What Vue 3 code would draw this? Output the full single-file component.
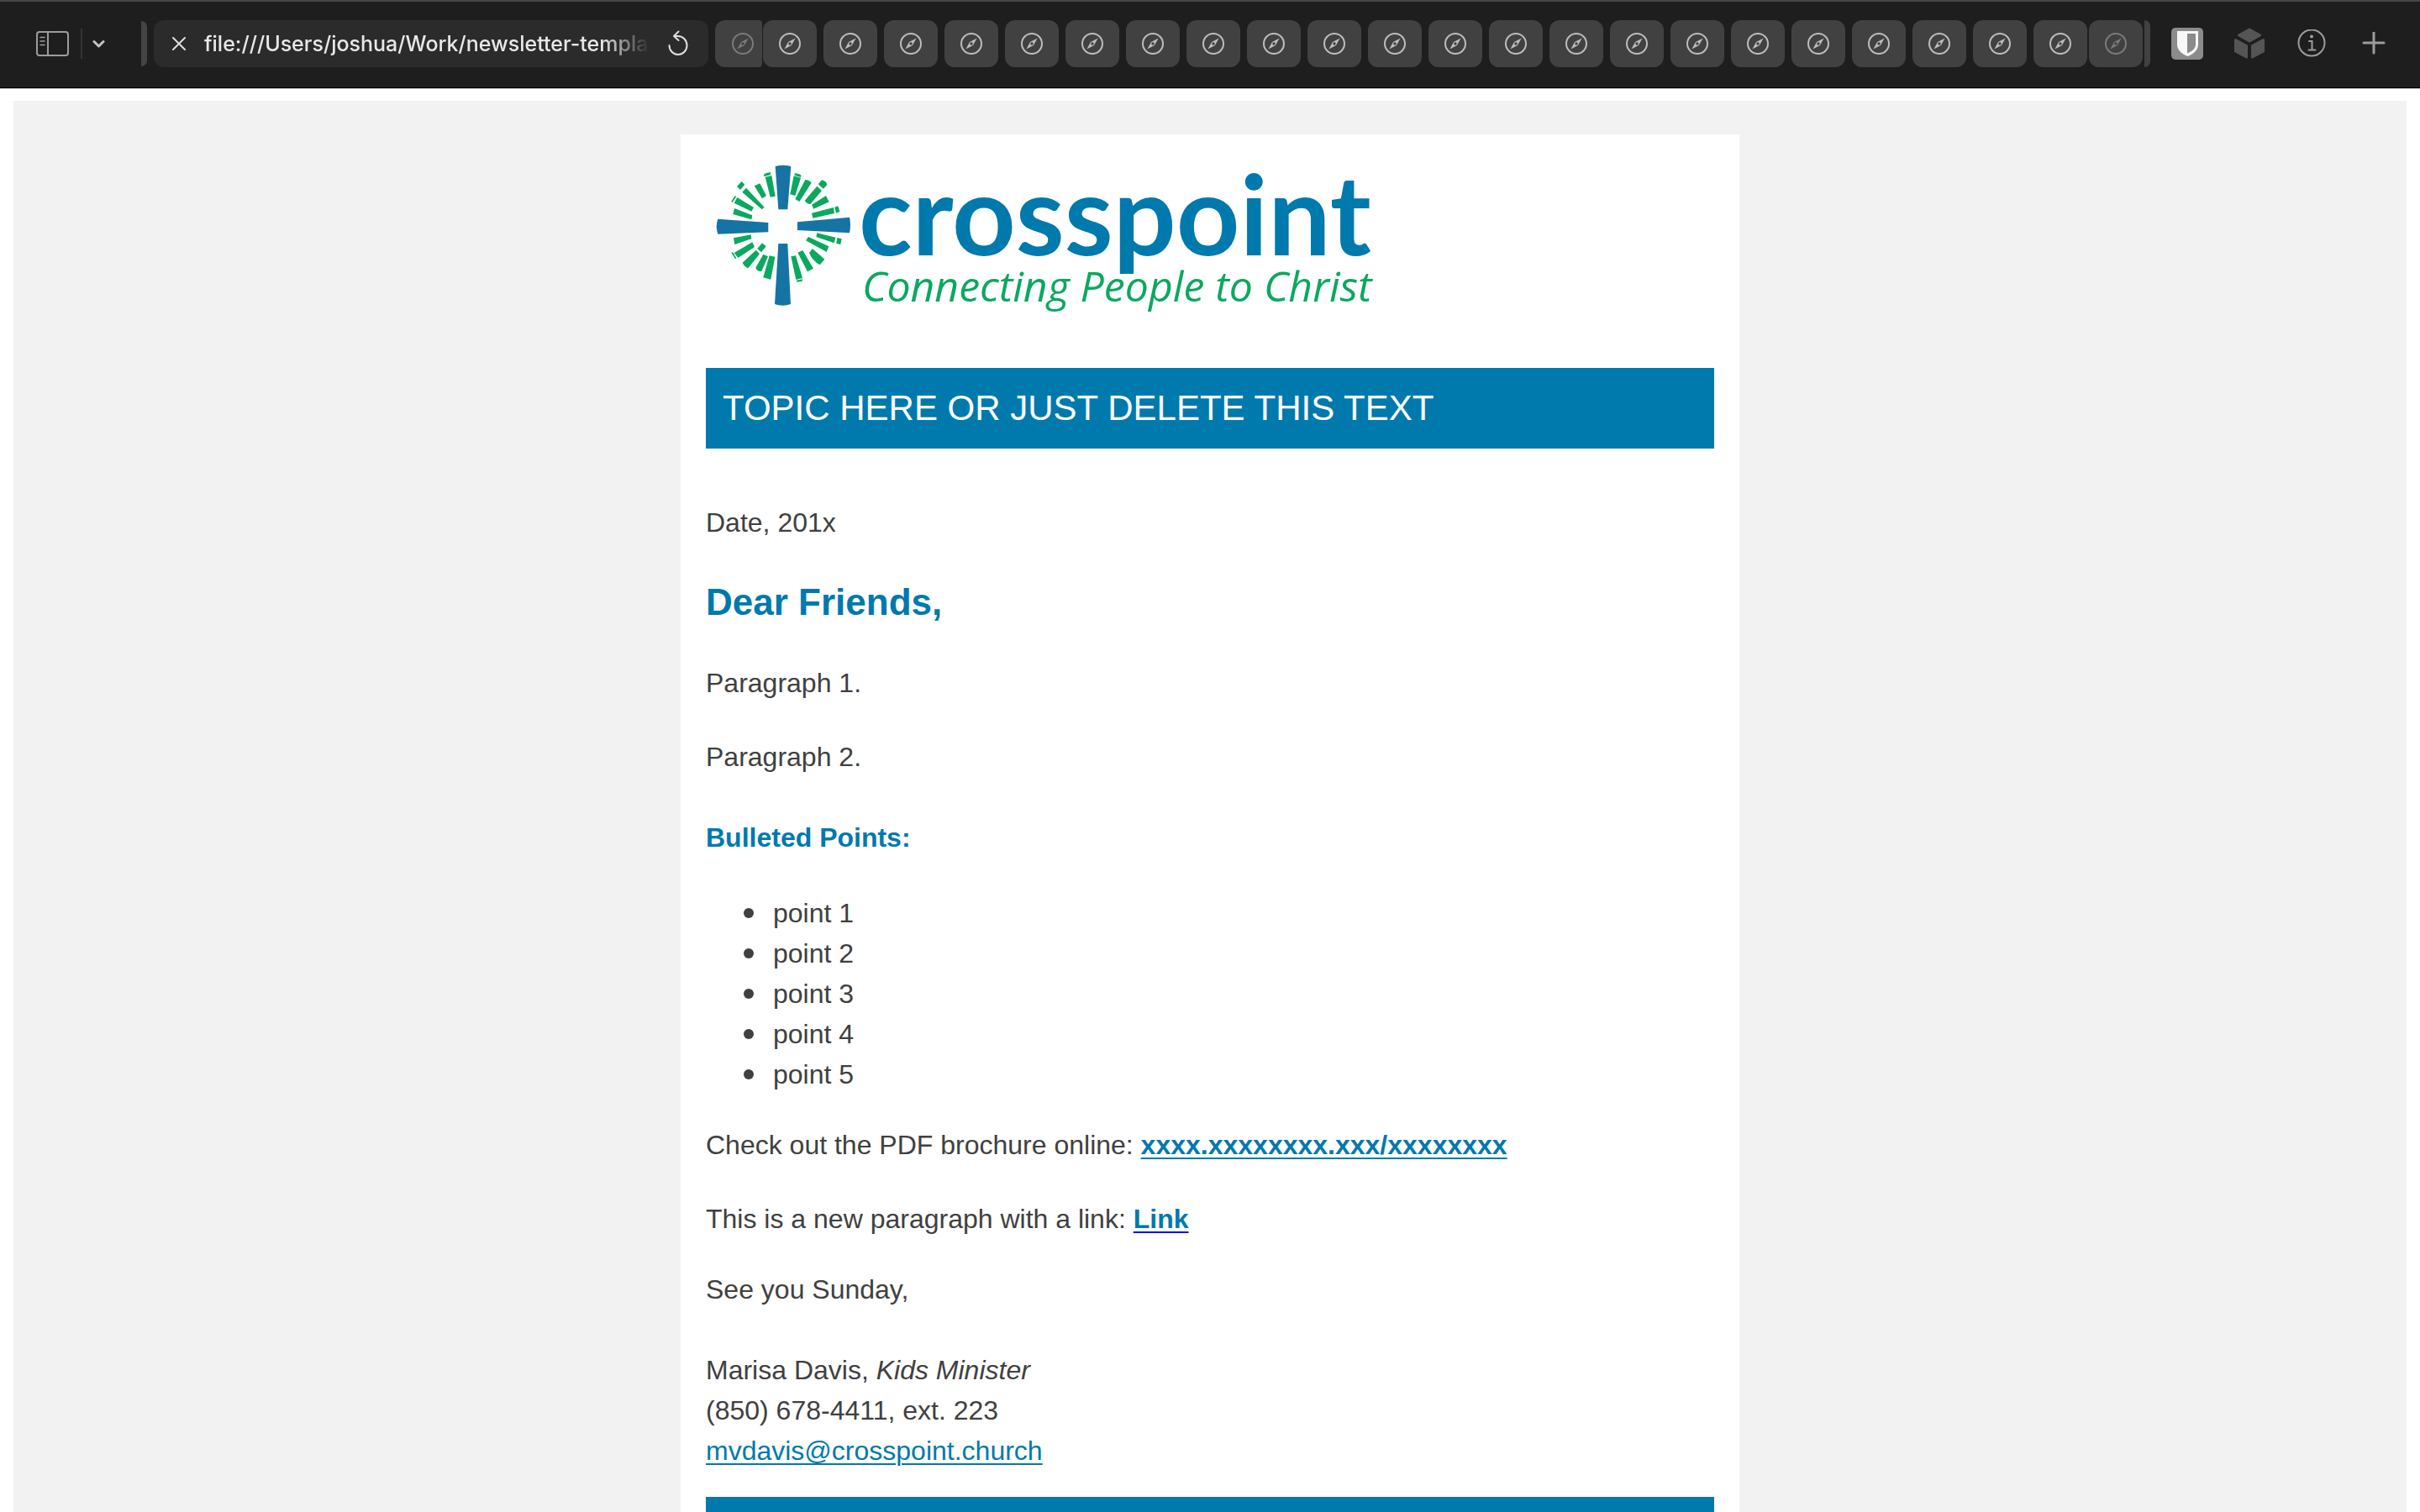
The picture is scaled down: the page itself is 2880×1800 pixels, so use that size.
<script setup>
const pinnedTabs = Array.from({ length: 22 }, (_, i) => i + 1)
const points = ['point 1', 'point 2', 'point 3', 'point 4', 'point 5']
</script>

<template>
  <div class="window">
    <svg class="symbols" aria-hidden="true">
      <symbol id="compass" viewBox="0 0 28 28">
        <circle cx="14" cy="14" r="12" fill="none" stroke="currentColor" stroke-width="2" />
        <path fill="currentColor" fill-rule="evenodd" d="M20.6 7.4 15.9 16 7.4 20.6 12 12.1ZM14 12.3a1.7 1.7 0 1 0 0 3.4 1.7 1.7 0 0 0 0-3.4Z" />
      </symbol>
    </svg>

    <header class="toolbar">
      <div class="sidebar-tools">
        <button type="button" aria-label="Show sidebar">
          <svg width="40" height="32" viewBox="0 0 40 32" fill="none" stroke="#9c9c9c" stroke-width="2">
            <rect x="2" y="2" width="37" height="28" rx="3" />
            <path d="M15 2v28" />
            <path d="M6 8.500h5M6 13h5M6 17.500h5" stroke-width="1.500" stroke-linecap="round" />
          </svg>
        </button>
        <span class="divider"></span>
        <button type="button" aria-label="Tab groups">
          <svg width="16" height="12" viewBox="0 0 16 12" fill="none" stroke="#c4c4c4" stroke-width="3" stroke-linecap="round" stroke-linejoin="round">
            <path d="M2 3.500 7.500 9 13 3.500" />
          </svg>
        </button>
      </div>
      <span class="stack-edge"></span>

      <div class="address">
        <button type="button" aria-label="Close tab">
          <svg width="16" height="16" viewBox="0 0 16 16" stroke="#dedede" stroke-width="2" stroke-linecap="round">
            <path d="M1 1l14 14M15 1 1 15" />
          </svg>
        </button>
        <input type="text" aria-label="Address" value="file:///Users/joshua/Work/newsletter-template/index.html" readonly />
        <button type="button" aria-label="Reload">
          <svg width="24" height="32" viewBox="0 0 24 32" fill="none" stroke="#dedede" stroke-width="2" stroke-linecap="round" stroke-linejoin="round">
            <path d="M1.500 18A10.500 11 0 1 0 12 7H8" />
            <path d="M12.500 1.500 7 7l5.500 5" />
          </svg>
        </button>
      </div>

      <nav class="tabs" aria-label="Tabs">
        <button type="button" class="tab dim tucked-left" aria-label="Tab">
          <svg width="28" height="28"><use href="#compass" /></svg>
        </button>
        <button v-for="n in pinnedTabs" :key="n" type="button" class="tab" :aria-label="`Tab ${n}`">
          <svg width="28" height="28"><use href="#compass" /></svg>
        </button>
        <button type="button" class="tab dim tucked-right" aria-label="Tab">
          <svg width="28" height="28"><use href="#compass" /></svg>
        </button>
        <span class="tab-tail"></span>
      </nav>

      <div class="extensions">
        <button type="button" aria-label="Password manager">
          <svg width="38" height="38" viewBox="0 0 38 38">
            <rect width="38" height="38" rx="5" fill="#8b8b8b" />
            <path fill="#f7f7f7" d="M7 4h25v16c0 7-6 11.500-12.500 14C13 31.500 7 27 7 20Z" />
            <path fill="#8b8b8b" d="M19 7h10v13c0 5-4.500 8-10 10.500Z" />
          </svg>
        </button>
        <button type="button" aria-label="Packages">
          <svg width="38" height="40" viewBox="0 0 38 40" fill="#555" stroke="#555" stroke-width="3" stroke-linejoin="round">
            <path d="M19 3 31.500 10 19 17 6.500 10Z" />
            <path d="M2.500 15.500 15.500 22.500V36L2.500 29Z" />
            <path d="M35.500 15.500 22.500 22.500V36L35.500 29Z" />
          </svg>
        </button>
        <button type="button" aria-label="Information">
          <svg width="34" height="34" viewBox="0 0 34 34" fill="none" stroke="#9c9c9c" stroke-width="2">
            <circle cx="17" cy="16" r="15.500" />
            <circle cx="17" cy="8.500" r="2" fill="#9c9c9c" stroke="none" />
            <path d="M14 14h3.500v10M13.500 24.500h8" stroke-linecap="round" />
          </svg>
        </button>
        <button type="button" aria-label="New tab">
          <svg width="28" height="28" viewBox="0 0 28 28" stroke="#9c9c9c" stroke-width="3" stroke-linecap="round">
            <path d="M14 1v24M2 13h24" />
          </svg>
        </button>
      </div>
    </header>

    <main class="page">
      <div class="backdrop">
        <article class="letter">
          <div class="logo">
            <svg class="mark" width="164" height="172" viewBox="150 130 492 516" aria-hidden="true">
              <g fill="#1574a3">
                <path d="M368 142q28-8 56 0l-12 154h-33Z" />
                <path d="M379 418h33l11 216q-28 10-57 0Z" />
                <path d="M163 330l180 13v34l-180 7q-10-27 0-54Z" />
                <path d="M447 341l186-17q6 27 0 56l-186-10Z" />
              </g>
              <g fill="#0ba860">
                <path d="M326 172q12-10 26-8l-2 9-22 5Z" />
                <path d="M332 180l23-5 13 74-18 3Z" />
                <path d="M293 212l20-9 23 44-15 10Z" />
                <path d="M231 214l17-18 11 11-16 19Z" />
                <path d="M250 234l14-15 65 69-9 8Z" />
                <path d="M211 267l13-19 5 2-14 21Z" />
                <path d="M221 273l11-20 59 36-8 14Z" />
                <path d="M217 313l5-21 64 25-3 15Z" />
                <path d="M437 167q16 0 24 8l-3 6-21-7Z" />
                <path d="M434 176l25 7-20 64-18-5Z" />
                <path d="M475 190q14 0 22 11l-43 67-15-9Z" />
                <path d="M521 206l13-15q16 3 19 17l-13 14Z" />
                <path d="M517 213l17 16-41 48q-10 1-20-13Z" />
                <path d="M498 279l51-32 11 22-55 25Z" />
                <path d="M498 309l78-20 3 21-77 17Z" />
                <path d="M580 288l12-4 6 20-13 5Z" />
                <path d="M517 380l66 16-5 20-64-22Z" />
                <path d="M589 397l16 4-4 20-15-3Z" />
                <path d="M486 394l73 34-8 20-74-41Z" />
                <path d="M501 436l43 38-17 20q-26-14-38-43Z" />
                <path d="M448 450l18-8 38 65-21 11Z" />
                <path d="M424 464l17-3 24 80-23 6Z" />
                <path d="M444 549l22-4-2 7-20 3Z" />
                <path d="M347 461l20 4-15 81-27-7Z" />
                <path d="M325 456l17 8-23 53q-15 2-21-13Z" />
                <path d="M299 441l13 14-41 51q-14-6-20-20Z" />
                <path d="M321 416l14 12-17 21-14-13Z" />
                <path d="M286 413l8 17-59 39-14-18Z" />
                <path d="M211 450l5-2 13 22-4 3Z" />
                <path d="M219 398l62-12 2 15-60 20Z" />
              </g>
            </svg>
            <div class="wordmark">
              <span class="name">crosspoint</span>
              <span class="tagline">Connecting People to Christ</span>
            </div>
          </div>

          <h1>TOPIC HERE OR JUST DELETE THIS TEXT</h1>

          <p>Date, 201x</p>
          <h2>Dear Friends,</h2>
          <p>Paragraph 1.</p>
          <p>Paragraph 2.</p>
          <h3>Bulleted Points:</h3>
          <ul>
            <li v-for="point in points" :key="point">{{ point }}</li>
          </ul>
          <p>Check out the PDF brochure online: <a class="strong" href="#">xxxx.xxxxxxxx.xxx/xxxxxxxx</a></p>
          <p>This is a new paragraph with a link: <a class="strong plain" href="#">Link</a></p>
          <p class="closing">See you Sunday,</p>
          <address>
            Marisa Davis, <em>Kids Minister</em><br />
            (850) 678-4411, ext. 223<br />
            <a href="mailto:mvdavis@crosspoint.church">mvdavis@crosspoint.church</a>
          </address>
          <div class="footer-band"></div>
        </article>
      </div>
    </main>
  </div>
</template>

<style>
body {
  margin: 0;
}
</style>

<style scoped>
.window {
  display: flex;
  flex-direction: column;
  height: 100vh;
  overflow: hidden;
  background: #fff;
  color: #404040;
  font-family: "Liberation Sans", Arial, sans-serif;
}

.symbols {
  position: absolute;
  width: 0;
  height: 0;
}

.toolbar {
  display: flex;
  flex: none;
  align-items: center;
  box-sizing: border-box;
  height: 105px;
  padding: 0 18px 2px 42px;
  border-top: 2px solid #464646;
  border-bottom: 1px solid #000;
  box-shadow: 0 1px #c4c4c4;
  background: #1e1e1e;
}

button {
  display: flex;
  align-items: center;
  justify-content: center;
  padding: 0;
  border: 0;
  background: none;
}

.sidebar-tools {
  display: flex;
  align-items: center;
  gap: 12px;
  width: 126px;
}

.divider {
  width: 2px;
  height: 36px;
  margin-left: 2px;
  background: #343434;
}

.stack-edge {
  width: 7px;
  height: 54px;
  margin-right: 8px;
  border-radius: 0 8px 8px 0;
  background: #444;
}

.address {
  display: flex;
  flex: 1;
  align-items: center;
  gap: 22px;
  box-sizing: border-box;
  min-width: 0;
  height: 56px;
  padding: 0 24px 0 22px;
  border-radius: 12px;
  background: #2b2b2b;
}

.address input {
  flex: 1;
  min-width: 0;
  padding: 0;
  border: 0;
  outline: 0;
  background: none;
  color: #e8e8e8;
  font: 500 25px/36px Inter, sans-serif;
  mask-image: linear-gradient(to right, #000 calc(100% - 56px), transparent);
}

.tabs {
  display: flex;
  gap: 8px;
  margin-left: 8px;
}

.tab {
  width: 64px;
  height: 56px;
  border-radius: 12px;
  background: #414141;
  color: #bdbdbd;
}

.dim {
  color: #7b7b7b;
}

.tucked-left {
  width: 56px;
  padding-left: 10px;
  margin-right: -7px;
  border-radius: 12px 4px 4px 12px;
}

.tucked-right {
  margin-left: -6px;
}

.tab-tail {
  width: 7px;
  margin-left: -6px;
  border-radius: 0 12px 12px 0;
  background: #414141;
}

.extensions {
  display: flex;
  align-items: center;
  margin-left: 7px;
}

.extensions button {
  width: 74px;
}

.page {
  display: flex;
  flex: 1;
  min-height: 0;
  padding: 15px 16px 0;
}

.backdrop {
  display: flex;
  flex: 1;
  justify-content: center;
  padding-top: 40px;
  background: #f2f2f2;
}

.letter {
  display: flex;
  flex-direction: column;
  box-sizing: border-box;
  width: 100%;
  max-width: 1260px;
  padding: 0 30px;
  background: #fff;
  font-size: 32px;
  line-height: 48px;
}

.logo {
  display: flex;
  box-sizing: border-box;
  height: 278px;
  padding: 34px 10px 0;
}

.mark {
  flex: none;
}

.wordmark {
  display: flex;
  flex-direction: column;
  margin-left: 8px;
  white-space: nowrap;
}

.name {
  color: #0079ad;
  font-family: Lato, sans-serif;
  font-size: 132px;
  font-weight: 700;
  line-height: 118px;
}

.tagline {
  padding-left: 4px;
  color: #0ba860;
  font-family: "Open Sans", sans-serif;
  font-size: 50px;
  font-style: italic;
  line-height: 56px;
}

h1 {
  margin: 0 0 64px;
  padding: 0 20px;
  background: #0079ad;
  color: #fff;
  font-size: 42px;
  font-weight: 400;
  line-height: 96px;
}

p {
  margin: 0 0 40px;
}

h2,
h3 {
  color: #0079ad;
}

h2 {
  margin: 3px 0 44px;
  font-size: 44px;
  line-height: 56px;
}

h3 {
  margin: 8px 0 42px;
  font-size: 32px;
}

ul {
  margin: 0 0 36px;
  padding-left: 45px;
  list-style: none;
}

li {
  display: flex;
  align-items: center;
  gap: 23px;
}

li::before {
  width: 12px;
  height: 12px;
  border-radius: 50%;
  background: #404040;
  content: "";
}

a {
  color: #0079ad;
  text-decoration-thickness: 2px;
  text-underline-offset: 4px;
}

.strong {
  font-weight: 700;
}

.plain {
  text-decoration-color: #0000ee;
}

.closing {
  margin: -4px 0 48px;
}

address {
  margin-bottom: 31px;
  font-style: normal;
}

.footer-band {
  flex: 1;
  background: #0079ad;
}
</style>
